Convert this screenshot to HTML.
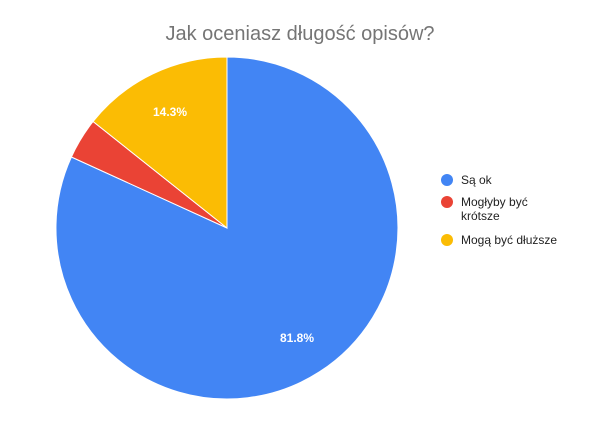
<!DOCTYPE html>
<html><head><meta charset="utf-8"><style>
body{margin:0;background:#fff;}
</style></head><body>
<svg width="600" height="423" xmlns="http://www.w3.org/2000/svg" style="display:block;font-family:'Liberation Sans',Arial,sans-serif">
<rect width="600" height="423" fill="#fff"/>
<text x="300" y="40" text-anchor="middle" font-size="20" fill="#757575">Jak oceniasz długość opisów?</text>
<path d="M227,228 L227,57 A171,171 0 1 1 71.4,157 Z" fill="#4285f4" stroke="#fff" stroke-width="1"/>
<path d="M227,228 L71.4,157 A171,171 0 0 1 93.1,121.5 Z" fill="#ea4335" stroke="#fff" stroke-width="1"/>
<path d="M227,228 L93.1,121.5 A171,171 0 0 1 227,57 Z" fill="#fbbc04" stroke="#fff" stroke-width="1"/>
<text x="170" y="116" text-anchor="middle" font-size="12" font-weight="bold" fill="#fff">14.3%</text>
<text x="297" y="342" text-anchor="middle" font-size="12" font-weight="bold" fill="#fff">81.8%</text>
<circle cx="447" cy="180" r="6" fill="#4285f4"/>
<text x="461" y="184" font-size="12" fill="#222">Są ok</text>
<circle cx="447" cy="202" r="6" fill="#ea4335"/>
<text x="461" y="206" font-size="12" fill="#222">Mogłyby być</text>
<text x="461" y="220" font-size="12" fill="#222">krótsze</text>
<circle cx="447" cy="240" r="6" fill="#fbbc04"/>
<text x="461" y="244" font-size="12" fill="#222">Mogą być dłuższe</text>
</svg>
</body></html>
